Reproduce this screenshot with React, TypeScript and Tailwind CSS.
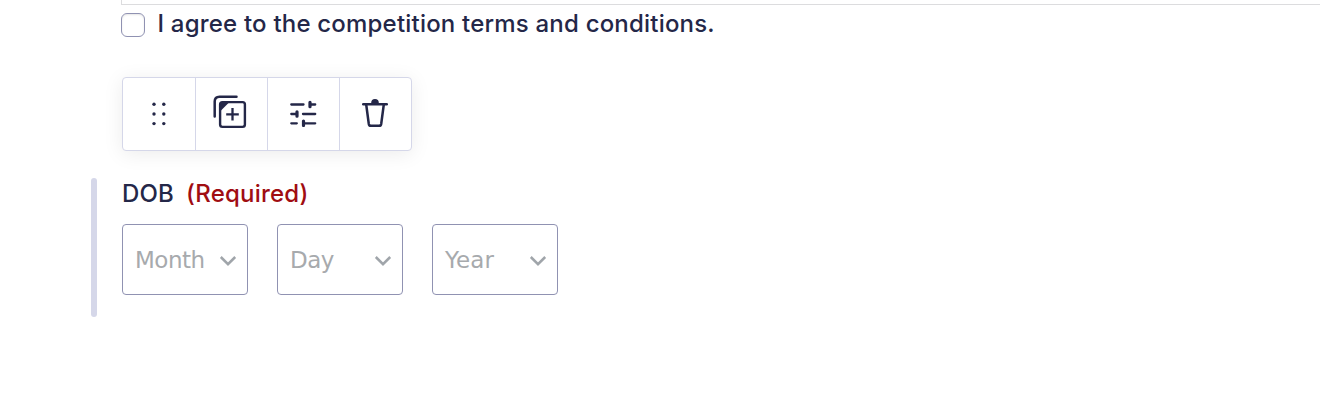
import { useState } from "react";

const selects = [
  { label: "Month", tracking: "tracking-[-0.5px]" },
  { label: "Day", tracking: "tracking-[-0.5px]" },
  { label: "Year", tracking: "tracking-[0.1px]" },
];

function DragIcon() {
  return (
    <svg width="16" height="26" viewBox="0 0 16 26" fill="#242748" aria-hidden>
      {[3, 12.8].map((x) =>
        [3.3, 13, 22.6].map((y) => <circle key={`${x}-${y}`} cx={x} cy={y} r="1.7" />)
      )}
    </svg>
  );
}

function DuplicateIcon() {
  return (
    <svg width="34" height="34" viewBox="0 0 34 34" fill="none" stroke="#242748" aria-hidden>
      <path d="M1.7 21.5V6.5Q1.7 1.7 6.5 1.7H23.5" strokeWidth="2.5" strokeLinecap="round" />
      <rect x="7.1" y="7.1" width="24.8" height="24.8" rx="2.3" strokeWidth="2.4" />
      <path d="M7 7H16.5L7 16.5Z" fill="#242748" stroke="none" />
      <path d="M19.5 13V25.6M13.2 19.3H25.8" strokeWidth="2.3" />
    </svg>
  );
}

function SettingsIcon() {
  return (
    <svg
      width="28"
      height="28"
      viewBox="0 0 28 28"
      fill="none"
      stroke="#242748"
      strokeWidth="2.3"
      strokeLinecap="round"
      aria-hidden
    >
      <path d="M2.3 5.5H14.5M21 5.5H26.2M2.3 15H7M14 15H26.2M2.3 24.3H7.8M14.5 24.3H26.2" />
      <path d="M21 3.3V7.7M8 12.8V17.2M14.5 22.1V26.5" strokeWidth="3.2" />
    </svg>
  );
}

function TrashIcon() {
  return (
    <svg width="28" height="30" viewBox="0 0 28 30" fill="none" stroke="#242748" aria-hidden>
      <path d="M10.2 5.5V4.8Q10.2 1 14 1T17.8 4.8V5.5Z" fill="#242748" stroke="none" />
      <path d="M2.3 6.2H25.7" strokeWidth="2.6" strokeLinecap="round" />
      <path
        d="M5.2 6.5L7.8 26Q8.1 27.8 9.8 27.8H18.2Q19.9 27.8 20.2 26L22.8 6.5"
        strokeWidth="2.5"
      />
    </svg>
  );
}

function ChevronIcon() {
  return (
    <svg
      width="18"
      height="12"
      viewBox="0 0 18 12"
      fill="none"
      stroke="#a0a5aa"
      strokeWidth="2.5"
      className="mt-0.5"
      aria-hidden
    >
      <path d="M1.8 2L9 9.2L16.2 2" />
    </svg>
  );
}

export default function App() {
  const [agreed, setAgreed] = useState(false);

  return (
    <div className="h-[415px] overflow-hidden bg-white font-['Inter',sans-serif] text-[#242748]">
      {/* Lower edge of the consent text box */}
      <div className="ml-[121px] h-[5px] border-b border-l border-[#dcdcde]" />

      <label className="ml-[121px] flex h-[40px] items-start">
        <input
          type="checkbox"
          checked={agreed}
          onChange={(e) => setAgreed(e.target.checked)}
          className="mt-2 h-6 w-6 appearance-none rounded-[6px] border border-[#9092b2] bg-white shadow-[inset_0_1px_2px_rgba(0,0,0,0.1)] checked:bg-[#242748]"
        />
        <span className="ml-[12.5px] mt-[2px] text-2xl leading-[34px] font-medium tracking-[0.2px] whitespace-nowrap">
          I agree to the competition terms and conditions.
        </span>
      </label>

      {/* Field toolbar */}
      <div className="mt-[32px] ml-[122px] flex h-[74px] w-[290px] rounded-[4px] border border-[#d5d7e9] bg-white shadow-[0_3px_20px_rgba(0,0,0,0.08)]">
        <button className="flex w-[73px] items-center justify-center border-r border-[#d5d7e9]">
          <DragIcon />
        </button>
        <button className="flex w-[72px] items-center justify-center border-r border-[#d5d7e9] pr-1 pb-1">
          <DuplicateIcon />
        </button>
        <button className="flex w-[72px] items-center justify-center border-r border-[#d5d7e9] pr-px pb-0.5">
          <SettingsIcon />
        </button>
        <button className="flex w-[71px] items-center justify-center pr-px pb-0.5">
          <TrashIcon />
        </button>
      </div>

      {/* Date field */}
      <div className="mt-[27px] ml-[91px] flex h-[139px]">
        <div className="w-[6px] rounded-[3px] bg-[#d5d7e9]" />
        <div className="ml-[25px]">
          <div className="flex h-[46px] text-2xl leading-[32px] font-medium tracking-[0.2px]">
            <span>DOB</span>
            <span className="ml-3 text-[#a00d12]">(Required)</span>
          </div>
          <div className="flex gap-[29px]">
            {selects.map((s) => (
              <button
                key={s.label}
                className="flex h-[71px] w-[126px] items-center justify-between rounded-[4px] border border-[#9092b2] bg-white pr-[10px] pl-3 font-['DejaVu_Sans',sans-serif] text-[23px] text-[#a7aaad]"
              >
                <span className={`mt-0.5 ${s.tracking}`}>{s.label}</span>
                <ChevronIcon />
              </button>
            ))}
          </div>
        </div>
      </div>
    </div>
  );
}
